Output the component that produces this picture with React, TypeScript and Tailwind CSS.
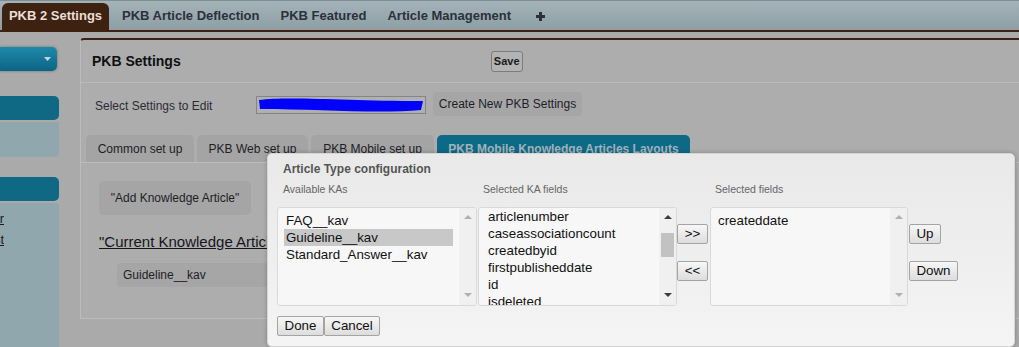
import React from 'react'

const topTabs = ['PKB Article Deflection', 'PKB Featured', 'Article Management']
const subTabs = [
  { label: 'Common set up', w: 'w-[108px]' },
  { label: 'PKB Web set up', w: 'w-[111px]' },
  { label: 'PKB Mobile set up', w: 'w-[123px]' },
]
const kaFields = ['articlenumber', 'caseassociationcount', 'createdbyid', 'firstpublisheddate', 'id', 'isdeleted']

function Arrow({ dir, dark }: { dir: 'up' | 'down'; dark?: boolean }) {
  return (
    <svg width="8" height="4" viewBox="0 0 8 4" className="block shrink-0">
      <path d={dir === 'up' ? 'M0 4L4 0L8 4Z' : 'M0 0L4 4L8 0Z'} fill={dark ? '#3c3c3c' : '#b0b0b0'} />
    </svg>
  )
}

function Track({ dark, thumb }: { dark?: boolean; thumb?: boolean }) {
  return (
    <div className="flex w-[17px] shrink-0 flex-col items-center self-stretch bg-[#f0f0f0] pt-[7px] pb-[8px]">
      <Arrow dir="up" dark={dark} />
      {thumb && <div className="mt-[14px] h-[24px] w-[13px] bg-[#c2c2c2]" />}
      <div className="flex-1" />
      <Arrow dir="down" dark={dark} />
    </div>
  )
}

function Btn({ children, w }: { children: React.ReactNode; w: string }) {
  return (
    <button className={`${w} flex h-[20px] items-center justify-center rounded-[2px] border border-[#a4a4a4] bg-gradient-to-b from-[#f7f7f7] to-[#dddddd] text-[13.33px] leading-none text-[#111]`}>
      {children}
    </button>
  )
}

export default function App() {
  return (
    <div className="relative h-[347px] w-full overflow-hidden bg-[#aaaaaa] font-['Liberation_Sans',Arial,sans-serif]">
      {/* top tab bar */}
      <div className="flex h-[30px] items-end border-t border-[#7b8d95] bg-gradient-to-b from-[#a5b3b9] to-[#8d9ea5]">
        <div className="ml-[2px] flex h-[27px] w-[107px] items-center justify-center rounded-t-[6px] bg-[#3d2212] pb-[1px] text-[13px] font-bold text-[#eadfd4]">
          PKB 2 Settings
        </div>
        <div className="ml-[13px] flex h-[27px] items-center gap-[21px] pb-[1px] text-[13px] font-bold text-[#2b313b]">
          {topTabs.map((t) => (
            <span key={t}>{t}</span>
          ))}
          <svg width="9" height="9" viewBox="0 0 9 9" className="ml-[4px]">
            <path d="M3 0h3v3h3v3H6v3H3V6H0V3h3z" fill="#2b313b" />
          </svg>
        </div>
      </div>
      <div className="h-[2px] bg-[#3d2212]" />

      <div className="flex">
        {/* sidebar */}
        <div className="flex w-[59px] shrink-0 flex-col">
          <div className="mt-[15px] flex h-[24px] w-[57px] items-center justify-end rounded-r-[5px] bg-gradient-to-b from-[#1f89aa] to-[#0a6585] pr-[6px] shadow-[0_0_3px_rgba(0,0,0,0.35)]">
            <svg width="7" height="4" viewBox="0 0 7 4">
              <path d="M0 0L3.5 4L7 0Z" fill="#c5d6de" />
            </svg>
          </div>
          <div className="mt-[25px] h-[24px] rounded-r-[5px] bg-[#0f6884]" />
          <div className="mt-[2px] h-[35px] rounded-br-[5px] bg-[#8fa7ad]" />
          <div className="mt-[20px] h-[24px] rounded-r-[5px] bg-[#0f6884]" />
          <div className="mt-[2px] h-[150px] rounded-tr-[3px] bg-[#8fa7ad] pt-[5px]">
            <div className="flex w-[4px] justify-end overflow-hidden text-[13px] leading-[21px] text-[#1c1c24] underline">
              <span>Manager</span>
            </div>
            <div className="flex w-[4px] justify-end overflow-hidden text-[13px] leading-[21px] text-[#1c1c24] underline">
              <span>List</span>
            </div>
          </div>
        </div>

        {/* main panel */}
        <div className="ml-[21px] mt-[6px] h-[281px] flex-1 rounded-tl-[4px] border-t-2 border-l border-b border-t-[#3d2212] border-l-[#bcbcbc] border-b-[#bcbcbc] bg-[#adadad]">
          <div className="flex h-[43px] items-center border-b border-[#bababa] pl-[11px]">
            <span className="text-[14px] font-bold text-[#101010]">PKB Settings</span>
            <button className="ml-[310px] mt-[1px] flex h-[21px] w-[32px] items-center justify-center rounded-[3px] border border-[#7c7c7c] bg-[#b3b3b3] text-[11px] font-bold text-[#1a1a1a]">
              Save
            </button>
          </div>
          <div className="flex items-center pl-[14px] pt-[9px]">
            <span className="mt-[4px] w-[161px] text-[12px] text-[#2c2c34]">Select Settings to Edit</span>
            <div className="mt-[1px] flex h-[18px] w-[170px] items-center border border-[#858585] bg-[#b0b0b0] pl-[1px]">
              <svg width="166" height="16" viewBox="0 0 166 16">
                <path d="M1 3 C30 -1 90 4 165 4 L163 13 C120 17 60 12 2 12 Z" fill="#0000ff" />
              </svg>
            </div>
            <div className="ml-[7px] flex h-[24px] w-[149px] items-center justify-center rounded-[4px] bg-[#a6a6a6] text-[12px] text-[#1e1e26]">
              Create New PKB Settings
            </div>
          </div>

          <div className="mt-[20px] flex h-[27px] items-end gap-[3px] border-b border-[#bbbbbb] pl-[5px]">
            {subTabs.map((t) => (
              <div key={t.label} className={`${t.w} flex h-[27px] items-center justify-center rounded-t-[5px] bg-[#a4a4a4] text-[12px] text-[#1e1e26]`}>
                {t.label}
              </div>
            ))}
            <div className="flex h-[27px] w-[253px] items-center justify-center rounded-t-[5px] bg-[#0d6a86] text-[12px] font-bold text-[#a2b3bb]">
              PKB Mobile Knowledge Articles Layouts
            </div>
          </div>

          <div className="pl-[18px] pt-[18px]">
            <div className="flex h-[34px] w-[152px] items-center justify-center rounded-[5px] bg-[#a5a5a5] text-[12px] text-[#1e1e26]">
              "Add Knowledge Article"
            </div>
            <div className="mt-[17px] text-[15px] leading-[19px] text-[#15151c] underline">"Current Knowledge Articles Layout"</div>
            <div className="ml-[18px] mt-[12px] flex h-[24px] w-[220px] items-center rounded-[4px] bg-[#a6a6a6] pl-[6px] text-[12px] text-[#1e1e26]">
              Guideline__kav
            </div>
          </div>
        </div>
      </div>

      {/* modal dialog */}
      <div className="absolute left-[267px] top-[153px] h-[194px] w-[748px] rounded-[5px] border border-[#d6d6d6] bg-gradient-to-b from-[#e9e9e9] to-[#f4f4f4] pl-[9px] pt-[7px] shadow-[0_0_4px_rgba(0,0,0,0.25)]">
        <div className="ml-[6px] h-[16px] text-[12px] font-bold leading-[16px] text-[#555]">Article Type configuration</div>
        <div className="mt-[6px] flex items-start">
          <div className="w-[200px]">
            <div className="h-[12px] pl-[6px] text-[10.5px] leading-[12px] text-[#666]">Available KAs</div>
            <div className="mt-[12px] flex h-[99px] overflow-hidden rounded-[3px] border border-[#d9d9d9] bg-[#f7f7f7]">
              <div className="flex-1 pl-[6px] pr-[6px] pt-[4px] text-[13.33px] leading-[17px] text-[#111]">
                <div className="pl-[2px]">FAQ__kav</div>
                <div className="bg-[#c8c8c8] pl-[2px]">Guideline__kav</div>
                <div className="pl-[2px]">Standard_Answer__kav</div>
              </div>
              <Track />
            </div>
          </div>
          <div className="ml-[1px] w-[199px]">
            <div className="h-[12px] pl-[5px] text-[10.5px] leading-[12px] text-[#666]">Selected KA fields</div>
            <div className="mt-[12px] flex h-[99px] overflow-hidden rounded-[3px] border border-[#d9d9d9] bg-[#f7f7f7]">
              <div className="flex-1 pl-[9px] text-[13.33px] leading-[17px] text-[#111]">
                {kaFields.map((f) => (
                  <div key={f}>{f}</div>
                ))}
              </div>
              <Track dark thumb />
            </div>
          </div>
          <div className="mt-[41px] flex flex-col gap-[17px]">
            <Btn w="w-[31px]">&gt;&gt;</Btn>
            <Btn w="w-[31px]">&lt;&lt;</Btn>
          </div>
          <div className="ml-[2px] w-[198px]">
            <div className="h-[12px] pl-[5px] text-[10.5px] leading-[12px] text-[#666]">Selected fields</div>
            <div className="mt-[12px] flex h-[99px] overflow-hidden rounded-[3px] border border-[#d9d9d9] bg-[#f7f7f7]">
              <div className="flex-1 pl-[7px] pt-[4px] text-[13.33px] leading-[17px] text-[#111]">
                <div>createddate</div>
              </div>
              <Track />
            </div>
          </div>
          <div className="ml-[1px] mt-[41px] flex flex-col items-start gap-[17px]">
            <Btn w="w-[32px]">Up</Btn>
            <Btn w="w-[49px]">Down</Btn>
          </div>
        </div>
        <div className="mt-[10px] flex">
          <Btn w="w-[47px]">Done</Btn>
          <Btn w="w-[56px]">Cancel</Btn>
        </div>
      </div>
    </div>
  )
}
